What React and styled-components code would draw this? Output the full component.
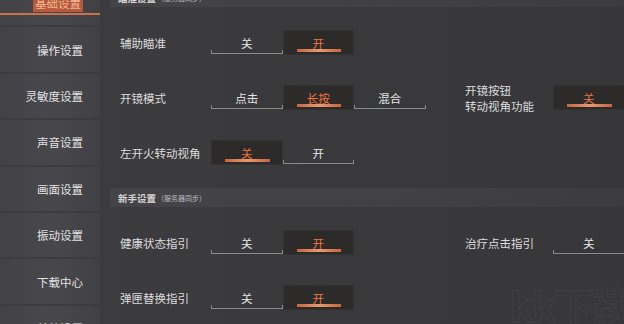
import React from 'react';
import styled, { createGlobalStyle } from 'styled-components';

const Global = createGlobalStyle`
  html, body {
    margin: 0;
    padding: 0;
    background: #3a3a3d;
    overflow: hidden;
  }
  body {
    font-family: "Noto Sans CJK SC", "Noto Sans", sans-serif;
  }
`;

const Page = styled.div`
  position: relative;
  width: 624px;
  height: 324px;
  overflow: hidden;
  display: grid;
  grid-template-columns: 100px 1fr;
  column-gap: 10px;
  align-items: start;
  background: linear-gradient(90deg, #3d3d40 0%, #3a3a3d 40%, #37373a 100%);
`;

const Sidebar = styled.nav`
  margin-top: -19px;
  display: flex;
  flex-direction: column;
`;

const NavItem = styled.div`
  position: relative;
  height: 44.4px;
  margin-bottom: 2px;
  display: flex;
  align-items: center;
  justify-content: flex-end;
  padding-right: 17px;
  font-size: 11.5px;
  color: #e2e2e2;
  background: linear-gradient(90deg, #434347 0%, #48484c 55%, #414145 100%);

  ${p => p.$active && `
    &::after {
      content: '';
      position: absolute;
      left: 0;
      right: 0;
      bottom: 10px;
      height: 2px;
      background: #c9704c;
    }
  `}
`;

const ActiveLabel = styled.span`
  padding: 1px 2px;
  background: rgba(214, 98, 58, 0.75);
  color: #f6b48e;
`;

const Main = styled.main`
  margin-top: -12px;
  display: flex;
  flex-direction: column;
`;

const SectionHead = styled.div`
  height: 19px;
  display: flex;
  align-items: center;
  padding-left: 8px;
  background: linear-gradient(90deg, #444447 0%, #414144 60%, #3c3c3f 100%);
  color: #d4d4d4;
  font-size: 9.5px;
  font-weight: 600;

  small {
    font-size: 7px;
    font-weight: 400;
    color: #bdbdbd;
    margin-left: 1px;
  }
`;

const Rows = styled.div`
  padding: 8px 0;
`;

const Row = styled.div`
  height: 55px;
  display: grid;
  grid-template-columns: 91px 254px 88px 1fr;
  align-items: center;
  padding-left: 10px;
`;

const Label = styled.div`
  font-size: 11.5px;
  line-height: 16px;
  color: #dcdcdc;
  white-space: nowrap;
`;

const Group = styled.div`
  display: flex;
`;

const Seg = styled.div`
  position: relative;
  width: 71.5px;
  height: 25px;
  display: flex;
  align-items: center;
  justify-content: center;
  font-size: 11.5px;
  color: ${p => (p.$on ? '#ee7440' : '#e6e6e6')};
  background: ${p => (p.$on ? '#2d2a2a' : 'transparent')};
  box-sizing: border-box;
  ${p => p.$on && 'border: 1px solid #343131;'}

  &::after {
    content: '';
    position: absolute;
    ${p =>
      p.$on
        ? `
      left: 13px;
      right: 12px;
      bottom: 2px;
      height: 3px;
      background: linear-gradient(90deg, #c8653e, #e79a72 50%, #c8653e);
    `
        : `
      left: 0;
      right: 0;
      bottom: 1px;
      height: 3px;
      border: 1px solid #8a8a8c;
      border-top: none;
    `}
  }
`;

const Watermark = styled.div`
  position: absolute;
  right: -6px;
  bottom: -10px;
  font-size: 40px;
  font-weight: 700;
  color: transparent;
  -webkit-text-stroke: 1px rgba(255, 255, 255, 0.06);
  letter-spacing: -2px;
`;

function Toggle({ options, value }) {
  return (
    <Group>
      {options.map(o => (
        <Seg key={o} $on={o === value}>{o}</Seg>
      ))}
    </Group>
  );
}

const nav = ['基础设置', '操作设置', '灵敏度设置', '声音设置', '画面设置', '振动设置', '下载中心', '其他设置'];

export default function App() {
  return (
    <>
      <Global />
      <Page>
        <Sidebar>
          {nav.map((n, i) => (
            <NavItem key={n} $active={i === 0}>
              {i === 0 ? <ActiveLabel>{n}</ActiveLabel> : n}
            </NavItem>
          ))}
        </Sidebar>
        <Main>
          <SectionHead>瞄准设置<small>（服务器同步）</small></SectionHead>
          <Rows>
            <Row>
              <Label>辅助瞄准</Label>
              <Toggle options={['关', '开']} value="开" />
            </Row>
            <Row>
              <Label>开镜模式</Label>
              <Toggle options={['点击', '长按', '混合']} value="长按" />
              <Label>开镜按钮<br />转动视角功能</Label>
              <Toggle options={['关']} value="关" />
            </Row>
            <Row>
              <Label>左开火转动视角</Label>
              <Toggle options={['关', '开']} value="关" />
            </Row>
          </Rows>
          <SectionHead>新手设置<small>（服务器同步）</small></SectionHead>
          <Rows>
            <Row>
              <Label>健康状态指引</Label>
              <Toggle options={['关', '开']} value="开" />
              <Label>治疗点击指引</Label>
              <Toggle options={['关']} value="" />
            </Row>
            <Row>
              <Label>弹匣替换指引</Label>
              <Toggle options={['关', '开']} value="开" />
            </Row>
          </Rows>
        </Main>
        <Watermark>kk下载</Watermark>
      </Page>
    </>
  );
}
